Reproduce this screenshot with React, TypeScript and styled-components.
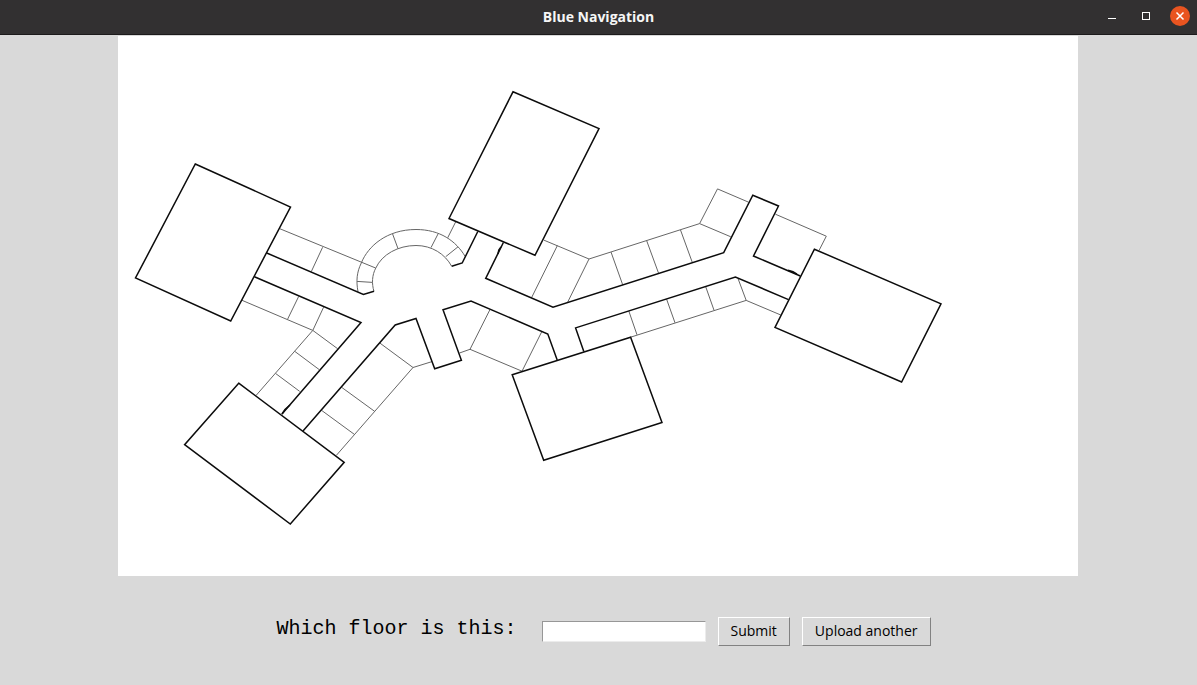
import React from "react";
import styled, { createGlobalStyle } from "styled-components";

const GlobalStyle = createGlobalStyle`
  * { box-sizing: border-box; }
  body {
    margin: 0;
    background: #d9d9d9;
    color: #000;
    font-family: "Open Sans", "Noto Sans", sans-serif;
  }
`;

const Window = styled.div`
  display: flex;
  flex-direction: column;
  min-height: 100vh;
`;

const TitleBar = styled.header`
  display: grid;
  grid-template-columns: 1fr auto 1fr;
  align-items: center;
  height: 35px;
  padding: 0 7px;
  background: #323031;
  border-bottom: 1px solid #1c1a1b;
`;

const Title = styled.h1`
  grid-column: 2;
  margin: 0;
  color: #f6f6f6;
  font-size: 14px;
  line-height: 20px;
  font-weight: 700;
`;

const WindowControls = styled.div`
  display: flex;
  justify-content: flex-end;
  gap: 14px;
  padding-bottom: 2px;
`;

const ControlButton = styled.button<{ $close?: boolean }>`
  display: flex;
  width: 20px;
  height: 20px;
  padding: 0;
  border: 0;
  border-radius: 50%;
  background: ${(p) => (p.$close ? "#e95420" : "transparent")};
`;

const Content = styled.main`
  display: flex;
  flex-direction: column;
  align-items: center;
  padding: 1px 1px 0 0;
`;

const Plan = styled.svg`
  display: block;
  width: 100%;
  max-width: 960px;
  background: #fff;
  fill: none;
`;

const Form = styled.form`
  display: flex;
  align-items: center;
  gap: 12px;
  padding: 41px 0 39px 11px;
`;

const Label = styled.label`
  padding: 0 13px 6px 0;
  font-family: "Liberation Mono", monospace;
  font-size: 20px;
  line-height: 23px;
  white-space: pre;
`;

const FloorInput = styled.input`
  width: 164px;
  height: 21px;
  padding: 0 2px;
  border: 1px solid;
  border-color: #979797 #ececec #ececec #979797;
  background: #fff;
  font: inherit;
  font-size: 14px;
  outline: 0;
`;

const PushButton = styled.button`
  height: 29px;
  padding: 0 12px 2px;
  border: 1px solid;
  border-color: #fff #828282 #828282 #fff;
  background: #d9d9d9;
  color: #000;
  font: inherit;
  font-size: 14px;
  line-height: 19px;
`;

const rooms = [
  "195.3,164 290.5,207 230.7,321 135.5,278",
  "513,91.8 599,128.6 535,255.3 449,218.5",
  "238.7,383.2 344.2,462.3 290.3,524 184.6,444.7",
  "512.2,374.8 630.6,337.2 662,422.4 543.7,460.2",
  "814.4,249.2 941,303.8 901.6,382 775,327.5",
];

const walls = [
  "266.7,253 363.4,294.4 374,291.3",
  "254.4,276.8 361,322.6 282,414",
  "303,431 395.2,325 416,318.5 434.7,368.7 461.4,360.2 443,309.8 471,301 547.8,334 557.2,360",
  "477.8,231.5 462.2,263 451.7,266.3",
  "503.4,242.5 485.7,278.3 553,307.3 723.7,252.7 752.8,195.2 778.5,206 753.5,256 800.3,276",
  "583.8,351.5 575.6,327.9 735.4,277 788.5,299.6",
  "788,270.3 793,271.8 797,274.2",
  "290,405 285,409.5 282,414",
  "501,247 498.8,250 498,254",
];

const partitions = [
  "280,228.8 375.6,268",
  "322.6,247.3 311.3,271.6",
  "357,281.4 372.5,282.4",
  "392.6,234 398,248.6",
  "438,234 431,247.6",
  "458,246.8 445.7,256.7",
  "455.6,222 447.7,237.8",
  "544,240.2 589,259 699.6,223.6 717.5,188.9 748.6,202.2",
  "699.6,223.6 730.8,236.8",
  "557.4,245.5 531.5,297.8",
  "589,259 567.5,302.5",
  "611,252 622.7,284.8",
  "646.6,240.5 658.6,273.3",
  "680.5,230 692.3,262.4",
  "775.4,214.2 826.3,236.2 819,250.5",
  "630.6,337.2 746.2,300.4 780.8,315",
  "628.8,311 637,334.8",
  "666.6,299.2 675,322.8",
  "705.7,286.7 714,310.2",
  "738,278.5 746.2,300.4",
  "242,300.3 312.8,330.4 256,395.5",
  "298.7,296.4 287.5,319.4",
  "323.6,307.2 312.8,330.4 337.6,348.7",
  "294.8,351.4 319.2,369.6",
  "275.5,373.4 299.7,391.4",
  "379.8,343 413,367.5 432,361.6",
  "413,367.5 336.3,455.4",
  "341.6,387.3 374.7,411.4",
  "321.5,410.3 354.4,434.4",
  "459.5,353 470,349.3 522,371.2 541.6,332",
  "470,349.3 490,309.5",
];

function FloorPlan() {
  return (
    <Plan viewBox="118 36 960 540" role="img" aria-label="Floor plan">
      <g stroke="#666" strokeWidth="1">
        {partitions.map((points) => (
          <polyline key={points} points={points} />
        ))}
        <path d="M358 291.7C356 281 356.8 272 361.3 263C368 246 387 229.5 416 229.5C440 229.5 456 241 465.2 256.5" />
        <path d="M374 291.3C371.6 284 372 275 375.8 268C382 254.5 398 245.5 416 245.5C432 245.5 445 254 451.7 266.3" />
      </g>
      <g stroke="#0c0c0c" strokeWidth="1.5">
        {rooms.map((points) => (
          <polygon key={points} points={points} />
        ))}
        {walls.map((points) => (
          <polyline key={points} points={points} />
        ))}
      </g>
    </Plan>
  );
}

export default function App() {
  return (
    <Window>
      <GlobalStyle />
      <TitleBar>
        <Title>Blue Navigation</Title>
        <WindowControls>
          <ControlButton type="button" aria-label="Minimize">
            <svg width="20" height="20" viewBox="0 0 20 20">
              <path d="M6 12H14V13H6Z" fill="#fff" />
            </svg>
          </ControlButton>
          <ControlButton type="button" aria-label="Maximize">
            <svg width="20" height="20" viewBox="0 0 20 20">
              <rect x="6.5" y="6.5" width="7" height="7" fill="none" stroke="#fff" />
            </svg>
          </ControlButton>
          <ControlButton type="button" aria-label="Close" $close>
            <svg width="20" height="20" viewBox="0 0 20 20">
              <path d="M6.5 6.5L13.5 13.5M13.5 6.5L6.5 13.5" stroke="#fff" strokeWidth="1.5" />
            </svg>
          </ControlButton>
        </WindowControls>
      </TitleBar>
      <Content>
        <FloorPlan />
        <Form onSubmit={(e: React.FormEvent) => e.preventDefault()}>
          <Label htmlFor="floor">Which floor is this:</Label>
          <FloorInput id="floor" type="text" />
          <PushButton type="submit">Submit</PushButton>
          <PushButton type="button">Upload another</PushButton>
        </Form>
      </Content>
    </Window>
  );
}
